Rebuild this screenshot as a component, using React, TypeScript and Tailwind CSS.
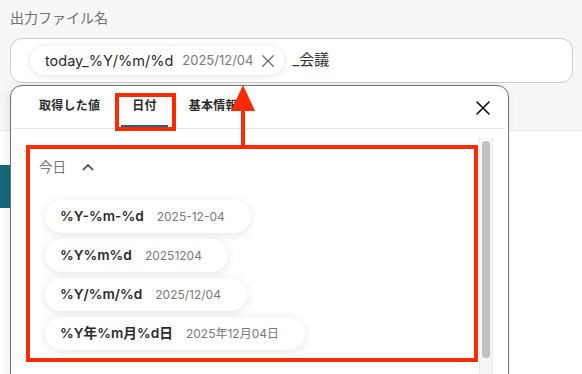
import type { ReactNode } from "react";

// Date-format picker dropdown under the "output file name" field,
// with the red annotation boxes/arrow drawn over it.

const formats = [
  { fmt: "%Y-%m-%d", value: "2025-12-04" },
  { fmt: "%Y%m%d", value: "20251204" },
  { fmt: "%Y/%m/%d", value: "2025/12/04" },
  { fmt: "%Y年%m月%d日", value: "2025年12月04日" },
];

function XIcon({ size, stroke, color }: { size: number; stroke: number; color: string }) {
  return (
    <svg width={size} height={size} viewBox="0 0 16 16" fill="none">
      <path d="M2 2L14 14M14 2L2 14" stroke={color} strokeWidth={stroke} strokeLinecap="round" />
    </svg>
  );
}

function Tab({ children, active }: { children: ReactNode; active?: boolean }) {
  return (
    <div
      className={`flex h-full items-center border-b-[3px] px-[11px] text-[12px] font-semibold tracking-[0.02em] text-[#2b2b2b] ${
        active ? "border-[#15687e]" : "border-transparent"
      }`}
    >
      {children}
    </div>
  );
}

export default function App() {
  return (
    <div className="relative h-[374px] w-[582px] overflow-hidden bg-white font-['Inter','Noto_Sans_CJK_JP',sans-serif]">
      <div className="h-[131px] border-b border-[#e8e8e8] bg-[#f7f7f7] px-[10px] pt-[8px]">
        <div className="text-[14px] leading-[20px] text-[#707070]">出力ファイル名</div>
        <div className="mt-[10px] flex h-[45px] w-[563px] items-center gap-[8px] rounded-[12px] border border-[#cdcdcd] bg-white pl-[19px]">
          <div className="flex h-[29px] items-center rounded-full bg-white pl-[15px] pr-[9px] shadow-[0_1px_6px_rgba(0,0,0,0.12)]">
            <span className="text-[14.5px] text-[#2b2b2b]">today_%Y/%m/%d</span>
            <span className="ml-[9px] text-[13px] text-[#7a7a7a]">2025/12/04</span>
            <span className="ml-[8px]">
              <XIcon size={14} stroke={1.4} color="#6a6a6a" />
            </span>
          </div>
          <span className="text-[15px] text-[#333]">_会議</span>
        </div>
      </div>

      {/* teal button peeking out behind the dropdown */}
      <div className="absolute left-0 top-[165px] h-[43px] w-[10px] bg-[#15687e]" />

      {/* dropdown */}
      <div className="absolute left-[10px] top-[85px] flex h-[300px] w-[499px] flex-col rounded-t-[12px] border border-[#707070] bg-white shadow-[-2px_0_8px_rgba(0,0,0,0.08)]">
        <div className="mx-[3px] flex h-[43px] items-center border-b border-[#e2e2e2] pl-[14px] pr-[14px]">
          <div className="flex h-full items-stretch gap-[10px]">
            <Tab>取得した値</Tab>
            <Tab active>日付</Tab>
            <Tab>基本情報</Tab>
          </div>
          <div className="ml-auto mt-[1px]">
            <XIcon size={16} stroke={1.6} color="#111" />
          </div>
        </div>

        <div className="flex flex-1">
          <div className="flex-1 pl-[28px] pt-[29px]">
            <div className="flex items-center gap-[16px] text-[13.5px] leading-[18px] text-[#777]">
              <span>今日</span>
              <svg width="12" height="8" viewBox="0 0 12 8" fill="none">
                <path d="M1.5 6.5L6 2L10.5 6.5" stroke="#666" strokeWidth="2" strokeLinecap="round" strokeLinejoin="round" />
              </svg>
            </div>
            <div className="ml-[6px] mt-[24px] flex flex-col items-start gap-[6px]">
              {formats.map((f) => (
                <div
                  key={f.fmt}
                  className="flex h-[33px] items-center gap-[13px] rounded-full bg-white pl-[15px] pr-[26px] shadow-[0_2px_10px_rgba(0,0,0,0.1)]"
                >
                  <span className="text-[13.7px] font-semibold text-[#2b2b2b]">{f.fmt}</span>
                  <span className="text-[12px] text-[#7a7a7a]">{f.value}</span>
                </div>
              ))}
            </div>
          </div>
          <div className="mr-[15px] mt-[9px] w-[14px] border-x border-[#ececec] bg-[#f6f6f6] px-[2px] pt-[3px]">
            <div className="h-[217px] rounded-full bg-[#c1c1c1]" />
          </div>
        </div>
      </div>

      {/* annotations */}
      <div className="absolute left-[115px] top-[93px] h-[38px] w-[61px] border-4 border-[#ff2a00]" />
      <div className="absolute left-[26px] top-[145px] h-[217px] w-[452px] border-4 border-[#ff2a00]" />
      <svg className="absolute left-0 top-0" width="582" height="374" viewBox="0 0 582 374">
        <polygon points="243,85 231,111 255,111" fill="#ff2a00" />
        <rect x="241" y="110" width="4" height="37" fill="#ff2a00" />
      </svg>
    </div>
  );
}
